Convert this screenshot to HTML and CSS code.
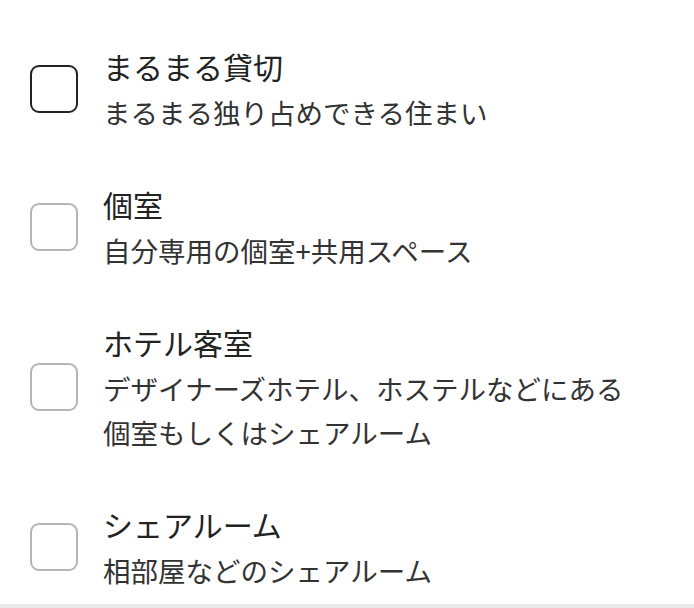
FILE: index.html
```html
<!DOCTYPE html>
<html lang="ja">

<head>
    <meta charset="UTF-8">
    <meta name="viewport" content="width=device-width, initial-scale=1.0">
    <title>部屋タイプ</title>
    <link rel="stylesheet" href="styles.css">
</head>

<body>
    <div class="panel">
        <ul class="options">
            <li class="option">
                <span class="check active"></span>
                <div class="text">
                    <p class="title">まるまる貸切</p>
                    <p class="desc">まるまる独り占めできる住まい</p>
                </div>
            </li>
            <li class="option">
                <span class="check"></span>
                <div class="text">
                    <p class="title">個室</p>
                    <p class="desc">自分専用の個室+共用スペース</p>
                </div>
            </li>
            <li class="option">
                <span class="check"></span>
                <div class="text">
                    <p class="title">ホテル客室</p>
                    <p class="desc">デザイナーズホテル、ホステルなどにある<br>個室もしくはシェアルーム</p>
                </div>
            </li>
            <li class="option">
                <span class="check"></span>
                <div class="text">
                    <p class="title">シェアルーム</p>
                    <p class="desc">相部屋などのシェアルーム</p>
                </div>
            </li>
        </ul>
    </div>
    <div class="divider"></div>
</body>

</html>
```

FILE: styles.css
```css
* {
    margin: 0;
    padding: 0;
    box-sizing: border-box;
}

body {
    background-color: #fff;
    font-family: "Noto Sans CJK JP", "Noto Sans", sans-serif;
    color: #222;
}

.panel {
    height: 604px;
    overflow: hidden;
}

.options {
    list-style: none;
    padding: 20px 0 0 30px;
}

.option {
    display: flex;
    align-items: center;
    gap: 25px;
    padding: 24.5px 0;
}

.check {
    flex: none;
    width: 48px;
    height: 48px;
    border: 2px solid #b5b5b5;
    border-radius: 9px;
}

.check.active {
    border-color: #222;
}

.title {
    font-size: 30px;
    line-height: 42px;
    color: #222;
}

.desc {
    margin-top: 3px;
    font-size: 27.5px;
    line-height: 44px;
    color: #333;
}

.divider {
    height: 4px;
    background-color: #ebebeb;
}
```
